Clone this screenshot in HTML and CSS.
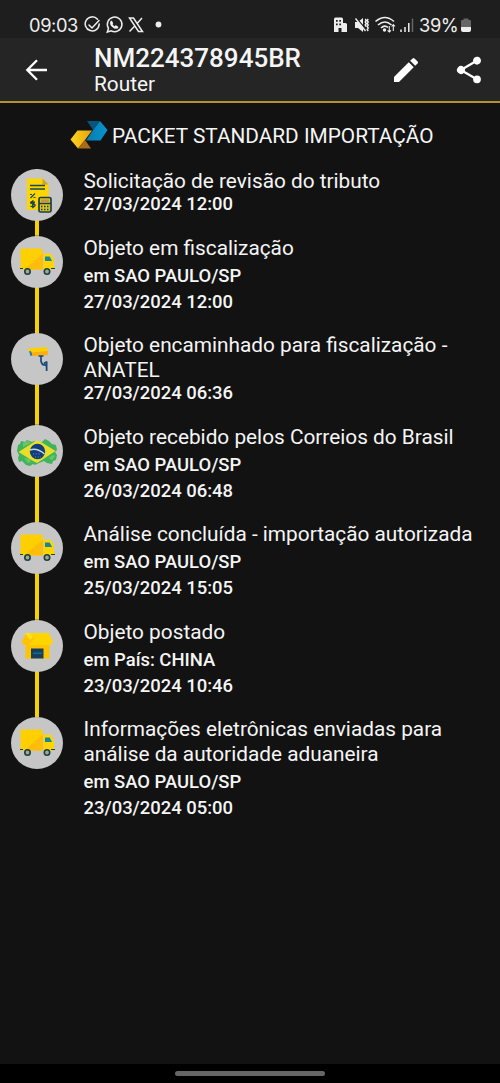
FILE: index.html
```html
<!DOCTYPE html>
<html lang="pt-BR">
<head>
<meta charset="utf-8">
<title>NM224378945BR</title>
<link rel="stylesheet" href="styles.css">
</head>
<body>
<svg class="defs" width="0" height="0" aria-hidden="true">
  <symbol id="truck" viewBox="0 0 52 52">
    <path fill="#ffd000" d="M9.500 12.500h22v21h-22z"/><path fill="#ffbd0b" d="M32 17.500v16H13z"/>
    <path fill="#ffd500" d="M32.500 17.500h7l3.500 6v10H32.500z"/>
    <path fill="#1287a5" d="M34 20.500h4.700l2.300 4.500H34z"/>
    <path stroke="#17404e" d="M9 32.500h3M40 32.500h4"/>
    <g fill="#aaa978" stroke="#17404e" stroke-width="1.600"><circle cx="16.500" cy="35.500" r="2.700"/><circle cx="36" cy="35.500" r="2.700"/></g>
  </symbol>
</svg>
<header class="status">
  <span class="clock">09:03</span>
  <svg class="notices" width="80" height="20" viewBox="0 0 80 20" fill="none" stroke="#eee" stroke-width="1.500" stroke-linecap="round">
    <path d="M13.500 4.300A7 7 0 1 0 15.200 9M5 10l3 3 7-7.500"/>
    <path d="M23.300 17l1.200-3.700a7.300 7.300 0 1 1 2.700 2.500z"/><path stroke-width="2" d="M27.300 6.800c-1.300 2.800 3.500 7 6 5.600M27.300 6.800l.8 1.500M33.300 12.400l-1.500-1"/>
    <path d="M45.500 3h4l9 13.500h-4zM58 3l-5.400 6M50.800 11L45.500 16.500" stroke-linecap="butt"/>
    <circle cx="74.500" cy="9.500" r="2.900" fill="#eee" stroke="none"/>
  </svg>
  <svg class="signals" width="82" height="20" viewBox="0 0 82 20">
    <path fill="#eee" d="M1 4q0-1.500 1.500-1.500h6Q10 2.500 10 4v4h2.500Q14 8 14 9.500V17H8.500v-4h-3v4H1z"/>
    <path fill="#1e1e1e" d="M3 5h1.700v1.700H3zM6.300 5H8v1.700H6.300zM3 8.500h1.700v1.700H3zM6.300 8.500H8v1.700H6.300z"/>
    <path fill="#eee" d="M22 7h3l5-4v14l-5-4h-3z"/><path stroke="#1e1e1e" stroke-width="1.800" d="M23 3L34 15.500"/><path stroke="#eee" stroke-width="1.400" fill="none" d="M22.500 3.500L32.500 16M32.200 4l1 1.500-1 1.500 1 1.500-1 1.500 1 1.500M35.200 4l-1 1.500 1 1.500-1 1.500 1 1.500-1 1.500 1 1.500-1 1.500 1 1.500"/>
    <path fill="none" stroke="#eee" stroke-width="1.600" d="M42.500 6.500q9.500-8 18.500 0M45 10q7-6 13.500 0M48 13q3.500-3.500 7-.5"/><circle cx="51.500" cy="15" r="1.700" fill="#eee"/>
    <path fill="none" stroke="#eee" stroke-width="1.100" d="M56.300 11v6m-1.700-1.700l1.700 1.700 1.700-1.700M60.300 16V9.500m-1.700 2l1.700-2 1.700 2"/>
    <path stroke="#eee" stroke-width="1.500" d="M68 17v-2.500M72 17v-5M75.800 17V8"/><path stroke="#666" stroke-width="1.500" d="M79.500 17V3.500"/>
  </svg>
  <span class="percent">39%</span>
  <svg class="battery" width="10" height="20" viewBox="0 0 10 20"><path fill="#666" d="M2.500 3.500h5V5H9q1 0 1 1v6H0V6q0-1 1-1h1.500z"/><path fill="#eee" d="M0 12h10v3q0 2-2 2H2q-2 0-2-2z"/></svg>
</header>
<nav class="bar">
  <svg class="back" width="24" height="24" viewBox="0 0 24 24" fill="none" stroke="#fff" stroke-width="2.300"><path d="M22 12H3M12 2.300L2.300 12l9.700 9.700"/></svg>
  <div class="heading"><div class="code"><span>NM224378945BR</span></div><div class="alias"><span>Router</span></div></div>
  <svg class="edit" width="32" height="32" viewBox="0 0 24 24" fill="#fff"><path d="M3 17.250V21h3.750L17.810 9.940l-3.750-3.750zM20.710 7.040a1 1 0 0 0 0-1.410l-2.340-2.340a1 1 0 0 0-1.410 0l-1.830 1.830 3.750 3.750z"/></svg>
  <svg class="share" width="32" height="32" viewBox="0 0 24 24" fill="#fff"><path d="M18 16.080c-.76 0-1.440.3-1.960.77L8.910 12.700c.05-.23.090-.46.090-.7s-.04-.47-.09-.7l7.050-4.110A3 3 0 1 0 15 5c0 .24.040.47.090.7L8.040 9.810a3 3 0 1 0 0 4.380l7.120 4.160c-.05.210-.08.430-.08.650a2.920 2.920 0 1 0 2.920-2.920z"/></svg>
</nav>
<main>
  <h1 class="service">
    <svg width="38" height="30" viewBox="0 0 38 30">
      <defs><linearGradient id="blue"><stop stop-color="#087cac"/><stop offset="1" stop-color="#0794d0"/></linearGradient><linearGradient id="gold"><stop stop-color="#ffd51c"/><stop offset="1" stop-color="#e3a312"/></linearGradient></defs>
      <path fill="url(#blue)" d="M23 9l7-9 7.500 9L30.500 19.500H16z"/><path fill="#07547c" d="M17 0h13l-7 9z"/>
      <path fill="url(#gold)" d="M7.500 9.500H22L15 19l-7 8.500L.5 18.500z"/><path fill="#a96d19" d="M15 19l6 8.500H8z"/>
    </svg>
    <span>PACKET STANDARD IMPORTAÇÃO</span>
  </h1>
  <ol class="events">
    <li><div class="rail"><svg class="badge" viewBox="0 0 52 52">
      <path fill="#ffd500" d="M16 9.500h15.500l6 6V41H16z"/><path fill="#cfa12f" d="M31.500 9.500l6 6h-6z"/>
      <path stroke="#174758" stroke-width="1.400" d="M19 16.500h15M19 20h15"/>
      <path stroke="#174758" stroke-width="1.200" d="M19.500 29l4.500-4.500M19 25.500h2M22.500 28.500h2"/>
      <path fill="none" stroke="#174758" stroke-width="1.500" d="M24 33.200q-4.500-1.400-4.300.7 4.600.9 4.300 2.500-.5 2.300-4.500.7M21.800 31.300v8"/>
      <rect x="28" y="28.500" width="12" height="14.500" rx="1.500" fill="#e0c21d" stroke="#17404e" stroke-width="1.700"/><path fill="#c09550" d="M30 30.500h8V33h-8z"/><path stroke="#17404e" stroke-width="1.300" d="M28 34.500h12"/><path stroke="#17404e" stroke-width="1.400" stroke-dasharray="1.500 1.500" d="M30 37.500h8M30 40.500h8"/>
    </svg></div><div class="info"><p class="title">Solicitação de revisão do tributo</p><p class="date">27/03/2024 12:00</p></div></li>
    <li><div class="rail"><svg class="badge"><use href="#truck"/></svg></div><div class="info"><p class="title">Objeto em fiscalização</p><p class="place">em SAO PAULO/SP</p><p class="date">27/03/2024 12:00</p></div></li>
    <li><div class="rail"><svg class="badge" viewBox="0 0 52 52">
      <path fill="#ffd000" d="M16 15.500l20-1.500 1 8-16 .7-2.500-4.500z"/><path fill="#ffad13" d="M20.500 19.500L37 18v4l-16 1z"/><path fill="#237eaa" d="M18 18l2.300.5 1 4-1.800.5z"/><path fill="none" stroke="#174a78" stroke-width="1.700" d="M27.500 23h5M30 23v5.500l1.500 3 4 1M33.500 33v-3l2.500-1"/><path fill="#174a78" d="M34.500 28.500h2V38h-1.700z"/>
    </svg></div><div class="info"><p class="title">Objeto encaminhado para fiscalização -<br>ANATEL</p><p class="date">27/03/2024 06:36</p></div></li>
    <li><div class="rail"><svg class="badge" viewBox="0 0 52 52">
      <path fill="#3eb45b" d="M7 20l2-1 1-3 4 1 2-2 5 2 2-1 3 2 5-1 3-3 4 2 3 3 4 1 1 5-2 2 2 3-1 5-3 1-1 3-5-1-3-2-5 2-4 2-2-1-3 2-4-1-4-4-3 1-1-4 1-3-2-4z"/>
      <path fill="#6fc36b" d="M12 18l5-2 3 2-8 4zM38 33l4-3 2 1-3 4zM13 33l6 1 1 3-3 1z"/>
      <path fill="#e9de28" d="M7.500 27L23 17l3-1.500 4 1.500L44.500 26 30 35.500 26 38l-4-2z"/><circle cx="26.500" cy="26.500" r="7.700" fill="#123e7c"/><path fill="none" stroke="#c5d7dd" stroke-width="1.400" d="M19 25q7-2.500 14.500 4"/><path stroke="#b5cbdf" stroke-width=".7" stroke-dasharray=".8 2" d="M22 29h8M24 32h6"/>
    </svg></div><div class="info"><p class="title">Objeto recebido pelos Correios do Brasil</p><p class="place">em SAO PAULO/SP</p><p class="date">26/03/2024 06:48</p></div></li>
    <li><div class="rail"><svg class="badge"><use href="#truck"/></svg></div><div class="info"><p class="title">Análise concluída - importação autorizada</p><p class="place">em SAO PAULO/SP</p><p class="date">25/03/2024 15:05</p></div></li>
    <li><div class="rail"><svg class="badge" viewBox="0 0 52 52">
      <path fill="#ffc400" d="M14.500 24h24v14.500h-24z"/><path fill="#ffd500" d="M15 13h23l4 9-2 3H12.500l-2-3z"/><path fill="#ffc20a" d="M15 13l9 5-6 7h-5.500l-2-3z"/><path fill="#ffe019" d="M14 13h5l3 4-3 3z"/><path fill="#173f5b" d="M20 28.500h12.500v10H20z"/><path stroke="#126b97" stroke-width="1.500" d="M22 33.300h9"/>
    </svg></div><div class="info"><p class="title">Objeto postado</p><p class="place">em País: CHINA</p><p class="date">23/03/2024 10:46</p></div></li>
    <li><div class="rail"><svg class="badge"><use href="#truck"/></svg></div><div class="info"><p class="title">Informações eletrônicas enviadas para<br>análise da autoridade aduaneira</p><p class="place">em SAO PAULO/SP</p><p class="date">23/03/2024 05:00</p></div></li>
  </ol>
</main>
<footer class="gesture"><div class="pill"></div></footer>
</body>
</html>
```

FILE: styles.css
```css
* { box-sizing: border-box; margin: 0; padding: 0; }
body { display: flex; flex-direction: column; height: 1083px; background: #121212; color: #f5f5f5; font-family: Roboto, "Liberation Sans", sans-serif; overflow: hidden; white-space: nowrap; }
.defs { display: none; }
svg { flex: none; }
.status { display: flex; align-items: center; height: 38px; padding: 12px 29px 0; background: #1e1e1e; flex: none; }
.clock, .percent { font: 18.300px/22px Inter, Roboto, sans-serif; letter-spacing: -.4px; color: #eee; }
.clock { width: 55px; }
.signals { margin-left: auto; }
.percent { width: 42px; margin-left: 4px; }
.bar { display: flex; align-items: center; height: 65px; padding: 0 15px 0 25px; background: #252525; border-bottom: 2px solid #b5922f; flex: none; }
.heading { width: 296px; margin-left: 45px; padding-top: 1px; }
.code { font-size: 26px; line-height: 28px; font-weight: 500; }
.alias { font-size: 20.800px; line-height: 25px; }
.share { margin-left: 31px; }
main { flex: 1; }
.service { display: flex; align-items: center; gap: 4px; height: 66px; padding-left: 70px; font-size: 20.800px; font-weight: 400; line-height: 26px; }
.events { list-style: none; padding-left: 10.500px; }
.events li { display: flex; gap: 21px; }
.rail { width: 52px; flex: none; background: linear-gradient(#f5d300, #f5d300) center / 4px 100% no-repeat; }
.events li:last-child .rail { background: none; }
.badge { display: block; width: 52px; height: 52px; border-radius: 50%; background: #c6c6c6; }
.info { padding-bottom: 21.500px; }
.title { font-size: 20.800px; line-height: 25px; }
.place, .date { font-size: 18.450px; font-weight: 500; }
.place { line-height: 30px; margin-bottom: 1px; }
.date { line-height: 20px; }
.gesture { display: flex; justify-content: center; height: 19px; padding-top: 7px; background: #000; flex: none; }
.pill { width: 150px; height: 5px; border-radius: 3px; background: #666; }
```
